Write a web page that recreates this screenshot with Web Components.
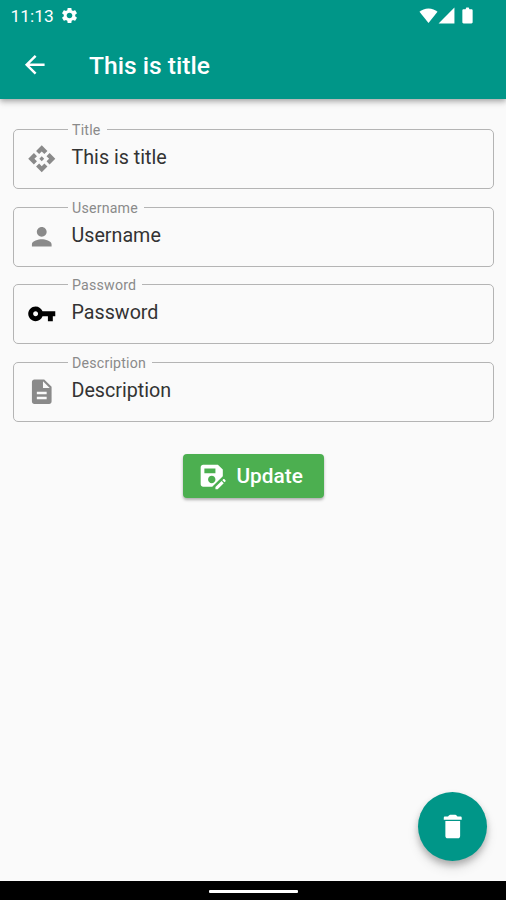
<!DOCTYPE html>
<html lang="en">
<head>
<meta charset="utf-8">
<title>This is title</title>
<style>
html,body{margin:0;height:100%}
body{font-family:Roboto,"Liberation Sans",sans-serif;background:#fafafa;overflow:hidden}
</style>
</head>
<body>
<edit-screen></edit-screen>
<script>
const ICONS = {
  settings: 'M19.14 12.94c.04-.3.06-.61.06-.94 0-.32-.02-.64-.07-.94l2.03-1.58c.18-.14.23-.41.12-.61l-1.92-3.32c-.12-.22-.37-.29-.59-.22l-2.39.96c-.5-.38-1.03-.7-1.62-.94l-.36-2.54c-.04-.24-.24-.41-.48-.41h-3.84c-.24 0-.43.17-.47.41l-.36 2.54c-.59.24-1.13.57-1.62.94l-2.39-.96c-.22-.08-.47 0-.59.22L2.74 8.87c-.12.21-.08.47.12.61l2.03 1.58c-.05.3-.09.63-.09.94s.02.64.07.94l-2.03 1.58c-.18.14-.23.41-.12.61l1.92 3.32c.12.22.37.29.59.22l2.39-.96c.5.38 1.03.7 1.62.94l.36 2.54c.05.24.24.41.48.41h3.84c.24 0 .44-.17.47-.41l.36-2.54c.59-.24 1.13-.56 1.62-.94l2.39.96c.22.08.47 0 .59-.22l1.92-3.32c.12-.22.07-.47-.12-.61l-2.01-1.58zM12 15.6c-1.98 0-3.6-1.62-3.6-3.6s1.62-3.6 3.6-3.6 3.6 1.62 3.6 3.6-1.62 3.6-3.6 3.6z',
  back: 'M20 11H7.83l5.59-5.59L12 4l-8 8 8 8 1.41-1.41L7.83 13H20v-2z',
  api: 'M14 12l-2 2-2-2 2-2 2 2zm-2-6l2.12 2.12 2.5-2.5L12 1 7.38 5.62l2.5 2.5L12 6zm-6 6l2.12-2.12-2.5-2.5L1 12l4.62 4.62 2.5-2.5L6 12zm12 0l-2.12 2.12 2.5 2.5L23 12l-4.62-4.62-2.5 2.5L18 12zm-6 6l-2.12-2.12-2.5 2.5L12 23l4.62-4.62-2.5-2.5L12 18z',
  person: 'M12 12c2.21 0 4-1.79 4-4s-1.79-4-4-4-4 1.79-4 4 1.79 4 4 4zm0 2c-2.67 0-8 1.34-8 4v2h16v-2c0-2.66-5.33-4-8-4z',
  key: 'M12.65 10C11.83 7.67 9.61 6 7 6c-3.31 0-6 2.69-6 6s2.69 6 6 6c2.61 0 4.83-1.67 5.65-4H17v4h4v-4h2v-4H12.65zM7 14c-1.1 0-2-.9-2-2s.9-2 2-2 2 .9 2 2-.9 2-2 2z',
  description: 'M14 2H6c-1.1 0-1.99.9-1.99 2L4 20c0 1.1.89 2 1.99 2H18c1.1 0 2-.9 2-2V8l-6-6zm2 16H8v-2h8v2zm0-4H8v-2h8v2zm-3-5V3.5L18.5 9H13z',
  saveAs: 'M21 12.4V7l-4-4H5c-1.11 0-2 .9-2 2v14c0 1.1.89 2 2 2h7.4l8.6-8.6zM15 15c0 1.66-1.34 3-3 3s-3-1.34-3-3 1.34-3 3-3 3 1.34 3 3zM6 6h9v4H6V6zm13.99 10.25 1.77 1.77L16.77 23H15v-1.77l4.99-4.98zm3.26.26-.85.85-1.77-1.77.85-.85c.2-.2.51-.2.71 0l1.06 1.06c.2.2.2.51 0 .71z',
  trash: 'M6 19.500c0 1.1.8 1.900 1.800 1.900h8.400c1 0 1.800-.8 1.800-1.900V7.300H6zM18.300 3.700h-2.500c-.5-1-1.300-1.400-2.300-1.400h-3c-1 0-1.800.4-2.300 1.400H5.700c-.6 0-1 .4-1 1v1.600h14.600V4.700c0-.6-.4-1-1-1z',
  wifi: 'M12 21.5L.6 7.3C3.5 4.700 7.500 3 12 3s8.500 1.700 11.400 4.300z',
  signal: 'M2 22h20V2z',
  battery: 'M17 4h-2.500l-1-2h-3l-1 2H7c-.8 0-1.500.6-1.500 1.400v15.200c0 .8.700 1.400 1.500 1.400h10c.8 0 1.500-.6 1.500-1.400V5.400c0-.8-.7-1.400-1.500-1.400z'
};
const define = (name, html, ready) => customElements.define(name, class extends HTMLElement {
  connectedCallback() {
    if (this.shadowRoot) return;
    this.attachShadow({mode: 'open'}).innerHTML = html;
    if (ready) ready(this, this.shadowRoot);
  }
});

define('m-icon', `<style>:host{display:block;flex:none;width:29.5px;height:29.5px}svg{display:block;width:100%;height:100%;fill:currentColor}</style><svg viewBox="0 0 24 24"><path/></svg>`,
  (el, root) => root.querySelector('path').setAttribute('d', ICONS[el.getAttribute('name')]));

define('status-bar', `<style>
:host{display:flex;align-items:center;height:31px;padding:0 29px 0 10.500px;color:#fff;font-size:17.4px;box-sizing:border-box}
.time{margin-right:6.500px}
.gear{width:19px;height:19px}
.right{margin-left:auto;display:flex;align-items:center;margin-top:-1px}
.wifi,.signal,.battery{width:19px;height:19px}
.signal{margin-left:-.5px}
.battery{margin-left:2px}
</style><span class="time">11:13</span><m-icon class="gear" name="settings"></m-icon>
<div class="right"><m-icon class="wifi" name="wifi"></m-icon><m-icon class="signal" name="signal"></m-icon><m-icon class="battery" name="battery"></m-icon></div>`);

define('app-bar', `<style>
:host{display:block;height:98.500px;flex:none;background:#009688;color:#fff;box-shadow:0 2px 5px rgba(0,0,0,.28),0 5px 6px rgba(0,0,0,.08)}
.bar{height:68px;display:flex;align-items:center;padding-left:20px}
.title{margin:2px 0 0 39.500px;font-size:24.600px;font-weight:500;line-height:28px}
</style><status-bar></status-bar><div class="bar"><m-icon name="back"></m-icon><span class="title"><slot></slot></span></div>`);

define('outlined-field', `<style>
:host{display:block;color:#8a8a8a}
fieldset{margin:0;min-width:0;height:68px;box-sizing:border-box;border:1.500px solid #b4b4b4;border-radius:5px;padding:0 13px}
legend{height:17px;line-height:19px;margin-left:41px;padding:0 6px 0 4px;font-size:14.200px;letter-spacing:.2px}
.row{display:flex;align-items:center;height:42px}
.value{color:#333;font-size:19.700px;line-height:24px;margin-left:15px;margin-top:-2px}
m-icon{color:var(--icon,#8a8a8a)}
</style><fieldset><legend></legend><div class="row"><m-icon></m-icon><span class="value"><slot></slot></span></div></fieldset>`,
  (el, root) => {
    root.querySelector('legend').textContent = el.getAttribute('label');
    const icon = document.createElement('m-icon');
    icon.setAttribute('name', el.getAttribute('icon'));
    root.querySelector('m-icon').replaceWith(icon);
  });

define('raised-button', `<style>
button{all:unset;box-sizing:border-box;width:141px;height:44px;display:flex;align-items:center;padding-left:14px;background:#4caf50;color:#fff;border-radius:4px;font-size:20.800px;font-weight:500;box-shadow:0 2px 3px rgba(0,0,0,.3)}
span{margin:1px 0 0 10px}
</style><button><m-icon name="saveAs"></m-icon><span><slot></slot></span></button>`);

define('floating-button', `<style>
:host{display:block}
button{all:unset;width:69px;height:69px;border-radius:50%;display:flex;align-items:center;justify-content:center;background:#009688;color:#fff;box-shadow:0 4px 6px rgba(0,0,0,.22),0 7px 12px rgba(0,0,0,.12)}
</style><button aria-label="Delete"><m-icon name="trash"></m-icon></button>`);

define('nav-bar', `<style>
:host{display:flex;flex:none;height:19px;background:#000;align-items:center;justify-content:center}
i{width:89px;height:3.500px;background:#fff;border-radius:1px;margin-top:2px}
</style><i></i>`);

define('edit-screen', `<style>
:host{display:flex;flex-direction:column;height:900px;background:#fafafa}
main{flex:1;display:flex;flex-direction:column}
form{display:flex;flex-direction:column;gap:9.600px;padding:22.500px 12px 0 13px}
.action{display:flex;justify-content:center;margin-top:32px;padding-left:1px}
.fab{margin:auto 19px 20px auto}
.black{--icon:#000}
</style>
<app-bar>This is title</app-bar>
<main>
<form>
<outlined-field label="Title" icon="api">This is title</outlined-field>
<outlined-field label="Username" icon="person">Username</outlined-field>
<outlined-field label="Password" icon="key" class="black">Password</outlined-field>
<outlined-field label="Description" icon="description">Description</outlined-field>
</form>
<div class="action"><raised-button>Update</raised-button></div>
<floating-button class="fab"></floating-button>
</main>
<nav-bar></nav-bar>`);
</script>
</body>
</html>
